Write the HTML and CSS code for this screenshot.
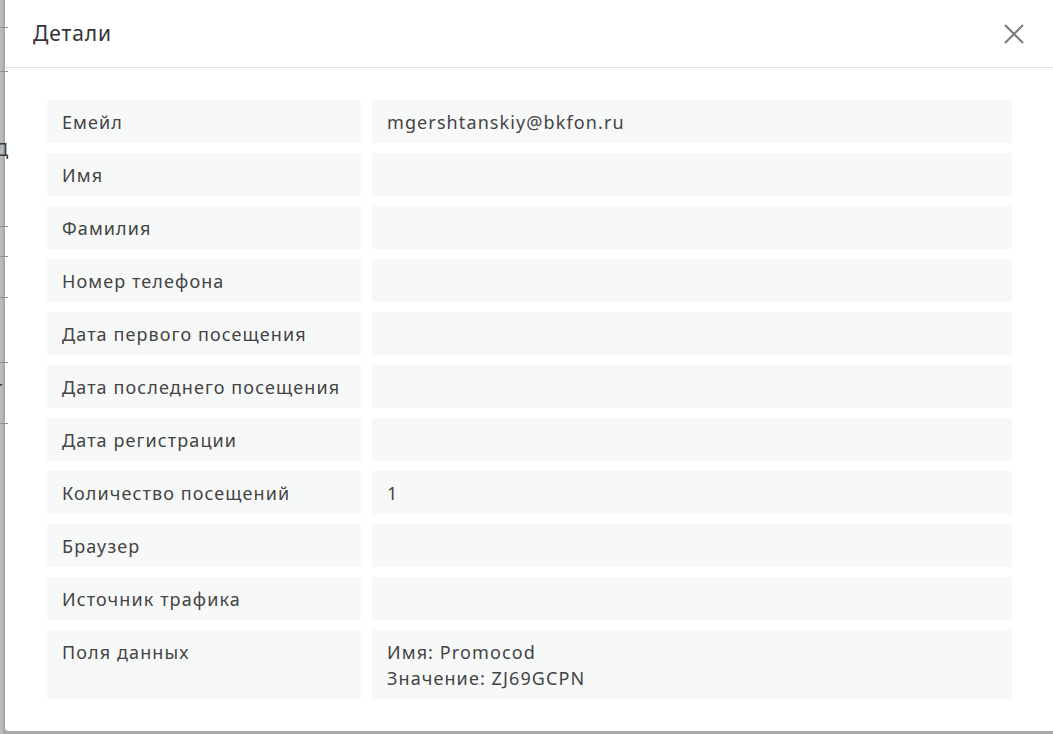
FILE: index.html
```html
<!DOCTYPE html>
<html lang="ru">
<head>
<meta charset="utf-8">
<title>Детали</title>
<link rel="stylesheet" href="styles.css">
</head>
<body>
<div class="page">
  <div class="backdrop">
    <span class="bd-line l1"></span>
    <span class="bd-line l2"></span>
    <span class="bd-char c1">Д</span>
    <span class="bd-line l3"></span>
    <span class="bd-line l4"></span>
    <span class="bd-line l5"></span>
    <span class="bd-line l6"></span>
    <span class="bd-char c2">r</span>
    <span class="bd-line l7"></span>
  </div>
  <div class="modal">
    <div class="modal-header">
      <h1 class="modal-title">Детали</h1>
      <button class="close" aria-label="Закрыть">
        <svg width="20" height="20" viewBox="0 0 20 20"><path d="M1 1 L19 19 M19 1 L1 19" stroke="#7a7a7a" stroke-width="2" fill="none"/></svg>
      </button>
    </div>
    <div class="modal-body">
      <div class="grid">
        <div class="cell key">Емейл</div><div class="cell val">mgershtanskiy@bkfon.ru</div>
        <div class="cell key">Имя</div><div class="cell val"></div>
        <div class="cell key">Фамилия</div><div class="cell val"></div>
        <div class="cell key">Номер телефона</div><div class="cell val"></div>
        <div class="cell key">Дата первого посещения</div><div class="cell val"></div>
        <div class="cell key">Дата последнего посещения</div><div class="cell val"></div>
        <div class="cell key">Дата регистрации</div><div class="cell val"></div>
        <div class="cell key">Количество посещений</div><div class="cell val">1</div>
        <div class="cell key">Браузер</div><div class="cell val"></div>
        <div class="cell key">Источник трафика</div><div class="cell val"></div>
        <div class="cell key">Поля данных</div><div class="cell val">Имя: Promocod<br>Значение: ZJ69GCPN</div>
      </div>
    </div>
  </div>
</div>
</body>
</html>
```
FILE: styles.css
```css
html, body {
  margin: 0;
  padding: 0;
  height: 100%;
  overflow: hidden;
  background: #a9a9ab;
  font-family: "Noto Sans", "Open Sans", sans-serif;
}
.page {
  display: flex;
  height: 734px;
}
.backdrop {
  position: relative;
  width: 5px;
  flex: none;
  background: #a6a7a9;
  border-left: 3px solid #b9babc;
  box-sizing: border-box;
}
.bd-line {
  position: absolute;
  left: -3px;
  width: 8px;
  height: 1px;
  background: #8e8f91;
}
.l1 { top: 27px; }
.l2 { top: 71px; }
.l3 { top: 226px; }
.l4 { top: 256px; }
.l5 { top: 297px; }
.l6 { top: 362px; }
.l7 { top: 423px; }
.bd-char {
  position: absolute;
  left: -8px;
  font-size: 18px;
  color: #3a3a3a;
  line-height: 1;
}
.c1 { top: 140px; }
.c2 { top: 378px; }
.modal {
  flex: 1;
  height: 731px;
  background: #fff;
  border-bottom-left-radius: 4px;
  display: flex;
  flex-direction: column;
}
.modal-header {
  height: 67px;
  border-bottom: 1px solid #e2e2e2;
  display: flex;
  align-items: center;
  justify-content: space-between;
  padding: 0 29px 0 28px;
  flex: none;
}
.modal-title {
  margin: 0;
  font-size: 21px;
  font-weight: 400;
  color: #333;
  letter-spacing: 0.9px;
  padding-bottom: 2px;
}
.close {
  border: 0;
  background: none;
  padding: 0;
  width: 20px;
  height: 20px;
  display: block;
  cursor: pointer;
}
.close svg { display: block; }
.modal-body {
  padding: 32px 41px 0 42px;
}
.grid {
  display: grid;
  grid-template-columns: 314px 1fr;
  column-gap: 11px;
  row-gap: 10px;
}
.cell {
  background: #f7f8f8;
  padding: 8.5px 15px;
  font-size: 18px;
  line-height: 26px;
  color: #444;
  letter-spacing: 1.1px;
  min-height: 26px;
}
```
